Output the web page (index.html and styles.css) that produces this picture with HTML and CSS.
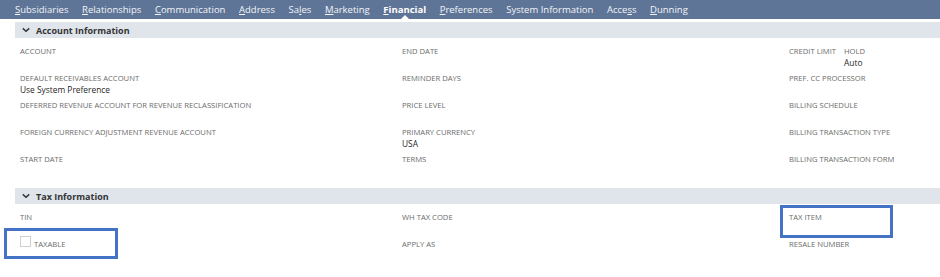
FILE: index.html
```html
<!DOCTYPE html>
<html lang="en">
<head>
    <meta charset="UTF-8">
    <meta name="viewport" content="width=device-width, initial-scale=1.0">
    <title>Customer - Financial</title>
    <link rel="stylesheet" href="styles.css">
</head>
<body>
    <nav class="tabs">
        <a href="#"><u>S</u>ubsidiaries</a>
        <a href="#"><u>R</u>elationships</a>
        <a href="#"><u>C</u>ommunication</a>
        <a href="#"><u>A</u>ddress</a>
        <a href="#">Sa<u>l</u>es</a>
        <a href="#"><u>M</u>arketing</a>
        <a href="#" class="active"><u>F</u>inancial</a>
        <a href="#"><u>P</u>references</a>
        <a href="#">System Information</a>
        <a href="#">Acce<u>s</u>s</a>
        <a href="#"><u>D</u>unning</a>
    </nav>

    <section class="section">
        <h3 class="section-head">
            <svg class="chev" viewBox="0 0 10 6"><path d="M1 1 L5 4.5 L9 1" /></svg>
            Account Information
        </h3>
        <div class="fields">
            <div class="col">
                <div class="field"><span class="label">Account</span></div>
                <div class="field"><span class="label">Default Receivables Account</span><span class="value">Use System Preference</span></div>
                <div class="field"><span class="label">Deferred Revenue Account for Revenue Reclassification</span></div>
                <div class="field"><span class="label">Foreign Currency Adjustment Revenue Account</span></div>
                <div class="field"><span class="label">Start Date</span></div>
            </div>
            <div class="col">
                <div class="field"><span class="label">End Date</span></div>
                <div class="field"><span class="label">Reminder Days</span></div>
                <div class="field"><span class="label">Price Level</span></div>
                <div class="field"><span class="label">Primary Currency</span><span class="value">USA</span></div>
                <div class="field"><span class="label">Terms</span></div>
            </div>
            <div class="col">
                <div class="field pair">
                    <div><span class="label">Credit Limit</span></div>
                    <div><span class="label">Hold</span><span class="value">Auto</span></div>
                </div>
                <div class="field"><span class="label">Pref. CC Processor</span></div>
                <div class="field"><span class="label">Billing Schedule</span></div>
                <div class="field"><span class="label">Billing Transaction Type</span></div>
                <div class="field"><span class="label">Billing Transaction Form</span></div>
            </div>
        </div>
    </section>

    <section class="section">
        <h3 class="section-head">
            <svg class="chev" viewBox="0 0 10 6"><path d="M1 1 L5 4.5 L9 1" /></svg>
            Tax Information
        </h3>
        <div class="fields">
            <div class="col">
                <div class="field"><span class="label">TIN</span></div>
                <div class="field check">
                    <span class="box"></span><span class="label">Taxable</span>
                    <span class="mark mark-taxable"></span>
                </div>
            </div>
            <div class="col">
                <div class="field"><span class="label">WH Tax Code</span></div>
                <div class="field"><span class="label">Apply As</span></div>
            </div>
            <div class="col">
                <div class="field">
                    <span class="label">Tax Item</span>
                    <span class="mark mark-item"></span>
                </div>
                <div class="field"><span class="label">Resale Number</span></div>
            </div>
        </div>
    </section>
</body>
</html>
```

FILE: styles.css
```css
*{
    padding: 0;
    margin: 0;
    box-sizing: border-box;
}
body {
    width: 940px;
    height: 277px;
    overflow: hidden;
    background: #fff;
    font-family: "Open Sans", "Liberation Sans", sans-serif;
    color: #222;
}
.tabs {
    height: 19px;
    background: #5f7597;
    display: flex;
    align-items: center;
    padding-left: 15px;
    column-gap: 13.6px;
    position: relative;
}
.tabs a {
    color: #f2f4f8;
    text-decoration: none;
    font-size: 9.5px;
    line-height: 19px;
    position: relative;
}
.tabs a u {
    text-decoration-thickness: 1px;
    text-underline-offset: 1px;
}
.tabs a.active {
    font-weight: 700;
    color: #fff;
}
.tabs a.active::after {
    content: "";
    position: absolute;
    left: 50%;
    bottom: 0;
    margin-left: -4px;
    border-left: 4px solid transparent;
    border-right: 4px solid transparent;
    border-bottom: 4px solid #fff;
}
.section {
    padding-left: 15px;
}
.section-head {
    margin-top: 3px;
    height: 16px;
    background: #e0e4eb;
    display: flex;
    align-items: center;
    column-gap: 6px;
    padding-left: 7px;
    font-size: 9px;
    font-weight: 700;
    color: #333;
}
.chev {
    width: 8px;
    height: 6px;
}
.chev path {
    fill: none;
    stroke: #333;
    stroke-width: 1.8;
}
.fields {
    display: grid;
    grid-template-columns: 382px 387px 1fr;
    padding: 7px 0 5px 5px;
}
.col {
    display: flex;
    flex-direction: column;
}
.field {
    height: 27px;
    display: flex;
    flex-direction: column;
    position: relative;
}
.label {
    font-size: 7.65px;
    line-height: 12px;
    text-transform: uppercase;
    color: #6b6b6b;
}
.value {
    font-size: 8.4px;
    line-height: 12px;
    color: #1f1f1f;
}
.pair {
    flex-direction: row;
    column-gap: 8px;
}
.pair > div {
    display: flex;
    flex-direction: column;
}
.check {
    flex-direction: row;
    align-items: flex-start;
    column-gap: 3px;
}
.box {
    width: 11px;
    height: 11px;
    border: 1px solid #cfcfcf;
    margin-top: -2px;
}
.mark {
    position: absolute;
    border: 3px solid #4472c4;
}
.mark-taxable {
    left: -16px;
    top: -10px;
    width: 114px;
    height: 31px;
}
.mark-item {
    left: -9px;
    top: -6px;
    width: 113px;
    height: 33px;
}
```
